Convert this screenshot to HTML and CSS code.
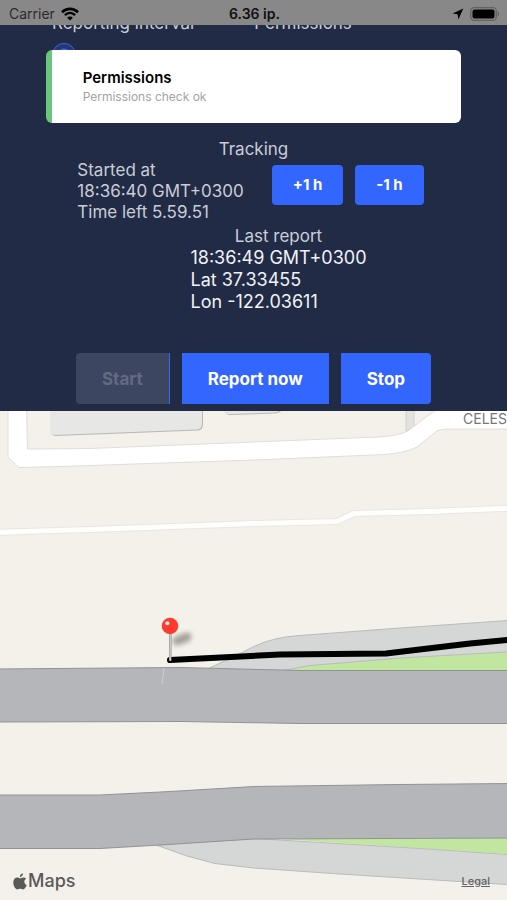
FILE: index.html
```html
<!DOCTYPE html>
<html lang="en">
<head>
<meta charset="utf-8">
<meta name="viewport" content="width=device-width, initial-scale=1">
<title>Tracking</title>
<link rel="stylesheet" href="styles.css">
</head>
<body>
<header class="status">
  <div class="status-left">
    <span>Carrier</span>
    <svg class="wifi" viewBox="0 0 18 14" aria-hidden="true">
      <path d="M1 5.2C5.6.7 12.400.7 17 5.200" fill="none" stroke="#000" stroke-width="2.600"/>
      <path d="M3.900 8.200c3-2.900 7.200-2.900 10.200 0" fill="none" stroke="#000" stroke-width="2.400"/>
      <path d="M9 13.600 6.100 10.700c1.600-1.600 4.200-1.600 5.800 0z"/>
    </svg>
  </div>
  <strong class="clock">6.36 ip.</strong>
  <div class="status-right">
    <svg class="arrow" viewBox="0 0 12 12" aria-hidden="true"><path d="M11.300.6.6 5.600l5 .7.8 5.200z"/></svg>
    <svg class="battery" viewBox="0 0 30 14" aria-hidden="true">
      <rect x=".7" y=".7" width="25.600" height="12.600" rx="3.500" fill="none" stroke="#626262" stroke-width="1.300"/>
      <rect x="2.500" y="2.500" width="22" height="9" rx="2"/>
      <path d="M27.600 4.600c2 .6 2 4.200 0 4.800z" fill="#626262"/>
    </svg>
  </div>
</header>

<main class="screen">
  <section class="panel">
    <div class="settings">
      <div class="setting">
        <h2>Reporting interval</h2>
        <label class="choice"><input type="radio" name="interval" checked>10 s</label>
      </div>
      <div class="setting">
        <h2>Permissions</h2>
      </div>
    </div>

    <h2 class="title">Tracking</h2>
    <div class="tracking">
      <p class="started">Started at<br>18:36:40 GMT+0300<br>Time left 5.59.51</p>
      <div class="adjust">
        <button type="button" class="btn small">+1 h</button>
        <button type="button" class="btn small">-1 h</button>
      </div>
    </div>

    <div class="report">
      <h2>Last report</h2>
      <p>18:36:49 GMT+0300<br>Lat 37.33455<br>Lon -122.03611</p>
    </div>

    <div class="actions">
      <button type="button" class="btn" disabled>Start</button>
      <button type="button" class="btn">Report now</button>
      <button type="button" class="btn">Stop</button>
    </div>
  </section>

  <section class="map" aria-label="Map">
    <svg class="canvas" viewBox="0 411 507 489" preserveAspectRatio="xMidYMid slice">
      <defs>
        <filter id="soft" filterUnits="userSpaceOnUse" x="155" y="620" width="50" height="40"><feGaussianBlur stdDeviation="2.500"/></filter>
        <linearGradient id="needle"><stop offset="0" stop-color="#8d8d8d"/><stop offset=".5" stop-color="#d5d5d5"/><stop offset="1" stop-color="#8d8d8d"/></linearGradient>
      </defs>
      <rect y="411" width="507" height="489" fill="#f3f1ea"/>
      <!-- buildings -->
      <path d="M51 405V432Q52 436 56 436L198 430.500Q203 430 203 424V405Z" fill="#b9b9b7"/>
      <path d="M50 405V431Q51 435 55 435L197 429.500Q202 429 202 423V405Z" fill="#e7e7e6"/>
      <path d="M224 405V411Q226 415 231 415L276 413.500Q283 412 284 405Z" fill="#b9b9b7"/>
      <path d="M223 405V410Q225 414 230 414L275 412.500Q282 411 283 405Z" fill="#e7e7e6"/>
      <path d="M406 405V431L414 427V405Z" fill="#e2e3df" stroke="#d0d1cd"/>
      <!-- streets -->
      <path d="M8 405V457L19 467.500L60 466.500L254 460L385 454.500Q405 453 417 447L437 431Q442 429 447 429H515V405H445L430 414L408 431Q398 436 378 437L254 442L90 448.500L27.500 449L26.500 405Z" fill="#fff" stroke="#dedfdd"/>
      <path d="M-5 532.500 90 529.500 254 523.500 337 521.500 354 513.500 430 511.500 515 508" fill="none" stroke="#e8e7e1" stroke-width="7"/>
      <path d="M-5 532.500 90 529.500 254 523.500 337 521.500 354 513.500 430 511.500 515 508" fill="none" stroke="#fefefd" stroke-width="5"/>
      <!-- upper highway and ramp -->
      <path d="M275 671 300 666 390 658.500 515 651V672Z" fill="#c1e6a0"/>
      <path d="M205 670 229 659 255 646Q274 637 300 635.500L400 628 515 620V651.500L400 658 310 665.500 280 671Z" fill="#d5d7d6" stroke="#b9bcba"/>
      <path d="M-5 669 180 667.500 300 670.500H515V723.500H300L180 721.500-5 722Z" fill="#b5b6ba" stroke="#929397"/>
      <path d="M164 668 162 684" stroke="#d0d0d4"/>
      <!-- lower highway and ramp -->
      <path d="M265 838 507 854H515V837Z" fill="#c1e6a0"/>
      <path d="M156 845 187 856 215 863.500 254 868 340 874 515 885V855L420 848.500 254 838.500Z" fill="#d5d7d6" stroke="#b9bcba"/>
      <path d="M-5 795H100L170 791.500 254 786.500 400 784.500 515 783.500V838L254 839 160 845 100 848.500H-5Z" fill="#b5b6ba" stroke="#929397"/>
      <!-- travelled route -->
      <path d="M170 660 280 654.500 386 653.500 470 643.500 512 639.500" fill="none" stroke="#000" stroke-width="6" stroke-linecap="round" stroke-linejoin="round"/>
      <!-- pin -->
      <path d="M177 641 187 637" stroke="#77746e" stroke-width="9" stroke-linecap="round" opacity=".65" filter="url(#soft)"/>
      <rect x="169" y="633" width="2.500" height="28" rx="1" fill="url(#needle)"/>
      <circle cx="170" cy="626" r="8.300" fill="#ff3b30"/>
      <circle cx="167.300" cy="623.300" r="2" fill="#fff" opacity=".9"/>
      <text x="463" y="424" class="street">CELES</text>
    </svg>
    <div class="credits">
      <span class="brand">
        <svg class="apple" viewBox="0 0 13 16" aria-hidden="true"><path d="M9.300.2c.1 1.900-1.200 3.400-2.900 3.500C6.200 2 7.700.4 9.300.2zM12.200 5.500c-2.400 1.400-2 4.800.6 5.800-.5 1.600-1.900 4.200-3.500 4.200-1 0-1.400-.6-2.600-.6s-1.700.6-2.600.6C2.100 15.500.2 12.100.2 9c0-3 1.800-4.700 3.700-4.700 1.200 0 2 .7 2.800.7s1.700-.8 3.100-.8c.9 0 1.900.5 2.400 1.300z"/></svg>
        Maps
      </span>
      <a class="legal" href="#">Legal</a>
    </div>
  </section>

  <aside class="toast" role="status">
    <strong>Permissions</strong>
    <span>Permissions check ok</span>
  </aside>
</main>
</body>
</html>
```

FILE: styles.css
```css
* {
  box-sizing: border-box;
}

body {
  margin: 0;
  min-height: 100vh;
  display: flex;
  flex-direction: column;
  overflow-x: hidden;
  background: #222b45;
  font-family: Inter, "Liberation Sans", sans-serif;
}

h2,
p {
  margin: 0;
  font-size: 17px;
  line-height: 21px;
  font-weight: 400;
}

.status {
  display: grid;
  grid-template-columns: 1fr auto 1fr;
  align-items: center;
  padding: 2px 7px 0 9px;
  background: #888;
  color: #111;
  font-size: 14px;
  line-height: 23px;
}

.status-left,
.status-right {
  display: flex;
  align-items: center;
  gap: 6px;
  color: #2b2b2b;
}

.status-right {
  justify-content: flex-end;
}

.clock {
  font-weight: 600;
}

.wifi {
  width: 18px;
  height: 14px;
}

.arrow {
  width: 12px;
  height: 12px;
}

.battery {
  width: 30px;
  height: 14px;
}

.screen {
  position: relative;
  flex: 1;
  display: flex;
  flex-direction: column;
}

.panel {
  overflow: hidden;
  padding-bottom: 7px;
  background: #222b45;
  color: #c9cdd8;
}

/* scrolled partly under the status bar */
.settings {
  display: grid;
  grid-template-columns: 4fr 5fr;
  margin-top: -12px;
  padding-left: 52px;
  height: 126px;
}

.choice {
  display: flex;
  align-items: center;
  gap: 16px;
  margin-top: 9px;
  color: #fff;
  font-size: 15px;
}

.choice input {
  appearance: none;
  width: 24px;
  height: 24px;
  margin: 0;
  border: 1px solid #3366ff;
  border-radius: 50%;
  background: radial-gradient(circle, #3366ff 6px, #29366b 7px);
}

.title {
  text-align: center;
}

.tracking {
  display: flex;
  justify-content: center;
  gap: 28px;
  padding-right: 6px;
}

.adjust {
  display: flex;
  gap: 12px;
  padding-top: 5px;
}

.btn {
  border: 0;
  border-radius: 4px;
  padding: 0 26px;
  height: 51px;
  background: #3366ff;
  color: #fff;
  font: 700 17px/24px Inter, "Liberation Sans", sans-serif;
}

.btn:disabled {
  background: #3d4660;
  color: #626a80;
}

.btn.small {
  height: 40px;
  padding: 0 21px;
  font-size: 15px;
}

.report {
  display: flex;
  flex-direction: column;
  align-items: center;
  padding: 2px 0 0 50px;
}

.report h2,
.report p {
  line-height: 22px;
}

.report p {
  color: #f0f2f7;
  font-size: 18px;
}

.actions {
  display: flex;
  justify-content: center;
  gap: 12px;
  margin-top: 40px;
}

.actions .btn {
  border-radius: 0;
}

.actions .btn:first-child {
  border-radius: 4px 0 0 4px;
  border-right: 1px solid #3366ff;
}

.actions .btn:last-child {
  border-radius: 0 4px 4px 0;
}

.toast {
  position: absolute;
  top: 25px;
  left: 9%;
  right: 9%;
  display: flex;
  flex-direction: column;
  padding: 18px 31px 17px;
  border-left: 6px solid #69c779;
  border-radius: 6px;
  background: #fff;
  color: #000;
  font-size: 15px;
  line-height: 20px;
}

.toast strong {
  font-weight: 600;
}

.toast span {
  color: #a3a3a3;
  font-size: 12px;
  line-height: 18px;
}

.map {
  position: relative;
  flex: 1;
  display: flex;
  flex-direction: column;
  justify-content: flex-end;
  min-height: 300px;
  overflow: hidden;
  background: #f3f1ea;
}

.canvas {
  position: absolute;
  inset: 0;
  width: 100%;
  height: 100%;
}

.street {
  font-size: 14px;
  fill: #777;
}

.credits {
  position: relative;
  display: flex;
  justify-content: space-between;
  align-items: center;
  padding: 0 17px 7px 13px;
}

.brand {
  display: flex;
  align-items: center;
  gap: 1px;
  color: #5a5a58;
  font-size: 18px;
  font-weight: 500;
  line-height: 24px;
}

.apple {
  width: 14px;
  height: 17px;
  fill: #5a5a58;
}

.legal {
  color: #636366;
  font-size: 11px;
  font-weight: 500;
}
```
